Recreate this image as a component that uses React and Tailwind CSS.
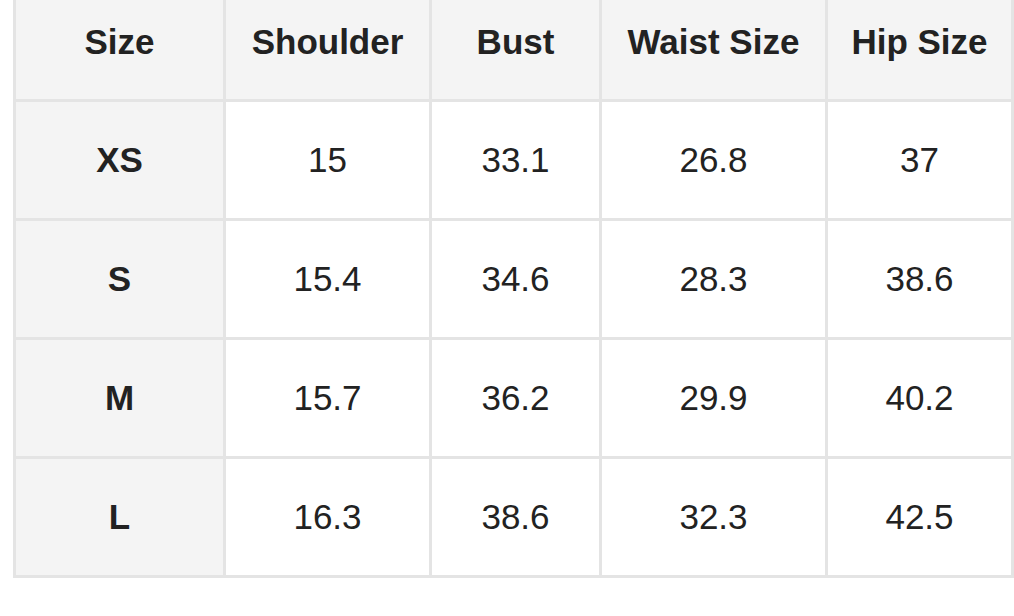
const headers = ['Size', 'Shoulder', 'Bust', 'Waist Size', 'Hip Size'];

const rows = [
  ['XS', '15', '33.1', '26.8', '37'],
  ['S', '15.4', '34.6', '28.3', '38.6'],
  ['M', '15.7', '36.2', '29.9', '40.2'],
  ['L', '16.3', '38.6', '32.3', '42.5'],
];

export default function App() {
  return (
    <div
      className="min-h-[616px] w-[1014px] bg-white pl-[13px] text-[#222]"
      style={{ fontFamily: '"Liberation Sans", Arial, sans-serif' }}
    >
      <div className="grid grid-cols-[207px_203px_167px_223px_183px] gap-[3px] bg-[#e4e4e4] px-[3px] pb-[3px]">
        {headers.map((h) => (
          <div
            key={h}
            className="flex h-[99px] items-center justify-center bg-[#f4f4f4] pb-[15px] text-[35px] font-bold"
          >
            {h}
          </div>
        ))}
        {rows.map((row) =>
          row.map((cell, i) => (
            <div
              key={row[0] + i}
              className={
                i === 0
                  ? 'flex h-[116px] items-center justify-center bg-[#f4f4f4] text-[35px] font-bold'
                  : 'flex h-[116px] items-center justify-center bg-white text-[35px]'
              }
            >
              {cell}
            </div>
          ))
        )}
      </div>
    </div>
  );
}
